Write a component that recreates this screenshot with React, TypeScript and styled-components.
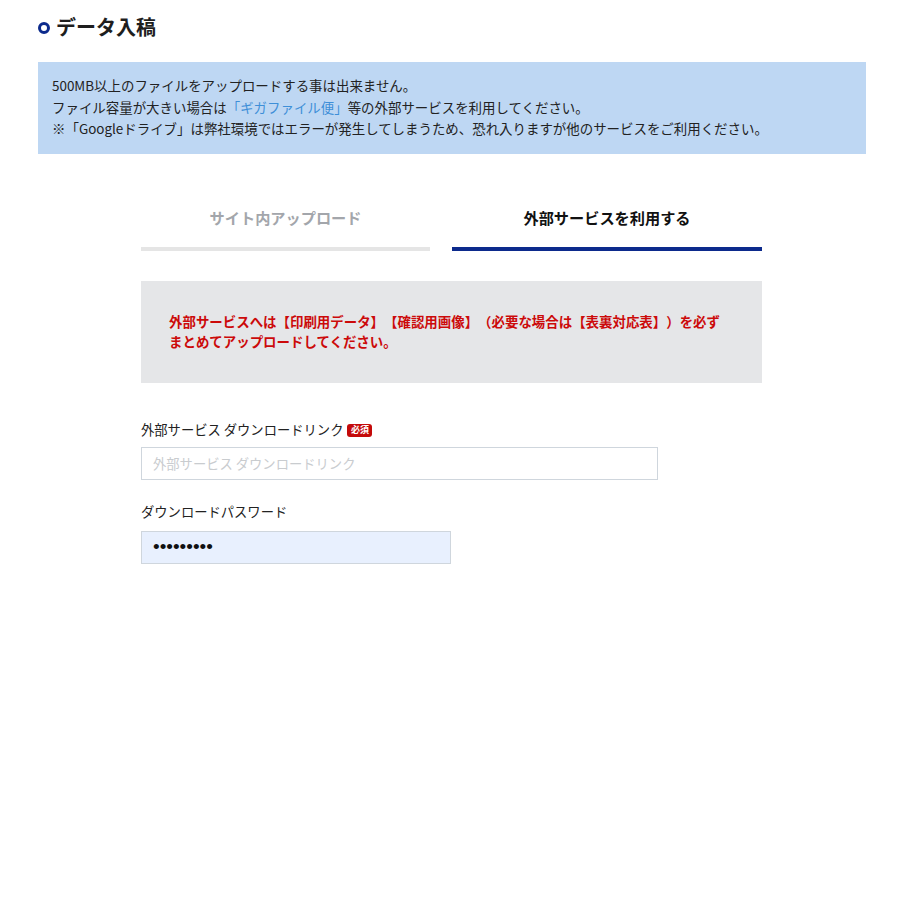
import styled, { createGlobalStyle } from "styled-components";

const GlobalStyle = createGlobalStyle`
  body {
    margin: 0;
    background: #fff;
    font-family: "Noto Sans CJK JP", "Noto Sans", sans-serif;
    color: #222;
    text-spacing-trim: space-all;
  }
`;

const Page = styled.main`
  padding: 10px 34px 40px 38px;
`;

const Title = styled.h1`
  display: flex;
  align-items: center;
  gap: 6px;
  margin: 0;
  font-size: 20px;
  line-height: 34px;
  font-weight: 700;
  color: #1e1e1e;
`;

const Ring = styled.span`
  width: 6px;
  height: 6px;
  border: 3px solid #0c2a8c;
  border-radius: 50%;
  margin-top: 1px;
`;

const InfoBox = styled.div`
  margin-top: 18px;
  background: #bed7f3;
  padding: 13px 14px 14px;
  font-size: 13.45px;
  line-height: 21.5px;
  color: #222;
`;

const Link = styled.span`
  color: #3e8fd8;
`;

const Form = styled.div`
  width: 621px;
  margin: 40px 0 0 103px;
`;

const Tabs = styled.div`
  display: grid;
  grid-template-columns: 289px 310px;
  justify-content: space-between;
`;

const Tab = styled.div<{ $active?: boolean }>`
  text-align: center;
  padding: 13px 0 20px;
  font-size: 15.2px;
  line-height: 20px;
  font-weight: 700;
  color: ${(p) => (p.$active ? "#111" : "#a3a6ab")};
  border-bottom: 4px solid ${(p) => (p.$active ? "#0c2a8c" : "#e5e5e5")};
`;

const Notice = styled.div`
  margin-top: 30px;
  background: #e5e6e8;
  padding: 30px 36px 32px 28px;
  font-size: 13.45px;
  line-height: 20px;
  font-weight: 700;
  color: #cc0a0a;
`;

const Field = styled.div<{ $top: number }>`
  margin-top: ${(p) => p.$top}px;
`;

const Label = styled.div<{ $gap: number }>`
  display: flex;
  align-items: center;
  gap: 4px;
  font-size: 13.3px;
  line-height: 20px;
  color: #222;
  margin-bottom: ${(p) => p.$gap}px;
`;

const Badge = styled.span`
  display: inline-flex;
  align-items: center;
  justify-content: center;
  width: 25px;
  height: 13px;
  background: #c40a0a;
  color: #fff;
  font-size: 9px;
  font-weight: 700;
  border-radius: 3px;
  margin-top: 1px;
`;

const Input = styled.input<{ $width: number; $filled?: boolean }>`
  display: block;
  box-sizing: border-box;
  width: ${(p) => p.$width}px;
  height: 33px;
  padding: 0 11px;
  border: 1px solid #cfd6dd;
  border-radius: 0;
  outline: none;
  background: ${(p) => (p.$filled ? "#e8f0fe" : "#fff")};
  font-family: "Noto Sans CJK JP", "Noto Sans", sans-serif;
  font-size: 13.3px;
  color: #111;
  &::placeholder {
    color: #c9cccf;
  }
  &[type="password"] {
    font-family: "Liberation Sans", Arial, sans-serif;
    font-size: 19px;
  }
`;

export default function App() {
  return (
    <>
      <GlobalStyle />
      <Page>
        <Title>
          <Ring />
          データ入稿
        </Title>
        <InfoBox>
          500MB以上のファイルをアップロードする事は出来ません。
          <br />
          ファイル容量が大きい場合は<Link>「ギガファイル便」</Link>等の外部サービスを利用してください。
          <br />
          ※「Googleドライブ」は弊社環境ではエラーが発生してしまうため、恐れ入りますが他のサービスをご利用ください。
        </InfoBox>
        <Form>
          <Tabs>
            <Tab>サイト内アップロード</Tab>
            <Tab $active>外部サービスを利用する</Tab>
          </Tabs>
          <Notice>
            外部サービスへは【印刷用データ】【確認用画像】（必要な場合は【表裏対応表】）を必ずまとめてアップロードしてください。
          </Notice>
          <Field $top={37}>
            <Label $gap={7}>
              外部サービス ダウンロードリンク<Badge>必須</Badge>
            </Label>
            <Input $width={517} placeholder="外部サービス ダウンロードリンク" />
          </Field>
          <Field $top={22}>
            <Label $gap={9}>ダウンロードパスワード</Label>
            <Input $width={310} $filled type="password" defaultValue="123456789" />
          </Field>
        </Form>
      </Page>
    </>
  );
}
